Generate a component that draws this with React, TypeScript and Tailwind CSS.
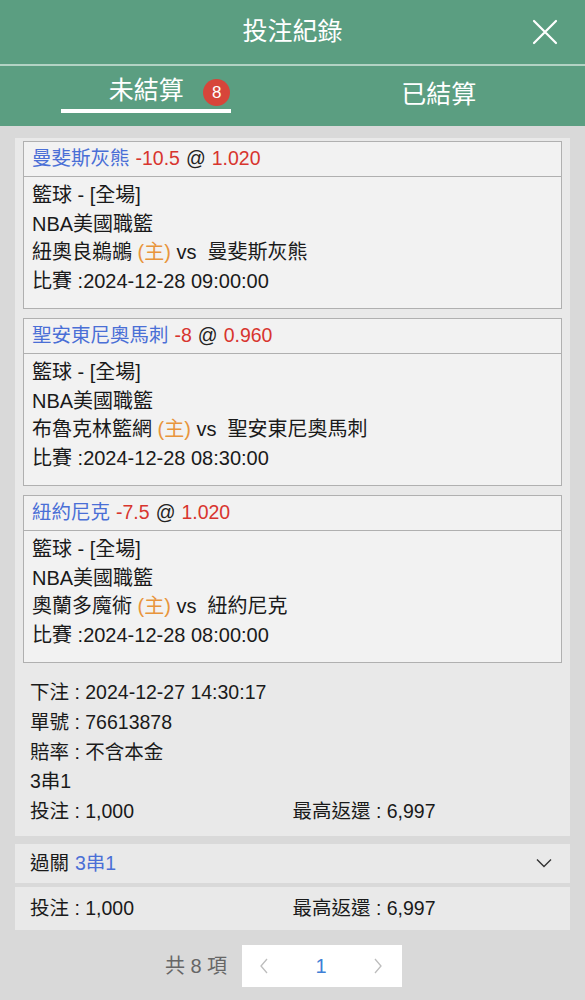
import React from "react";

const font = { fontFamily: '"Liberation Sans", "Noto Sans CJK TC", sans-serif' };

type Bet = { team: string; hdp: string; odds: string; home: string; away: string; time: string };

const bets: Bet[] = [
  { team: "曼斐斯灰熊", hdp: "-10.5", odds: "1.020", home: "紐奧良鵜鶘", away: "曼斐斯灰熊", time: "2024-12-28 09:00:00" },
  { team: "聖安東尼奧馬刺", hdp: "-8", odds: "0.960", home: "布魯克林籃網", away: "聖安東尼奧馬刺", time: "2024-12-28 08:30:00" },
  { team: "紐約尼克", hdp: "-7.5", odds: "1.020", home: "奧蘭多魔術", away: "紐約尼克", time: "2024-12-28 08:00:00" },
];

function Card({ b }: { b: Bet }) {
  return (
    <div className="border border-[#b0b0b0] bg-[#f2f2f2]">
      <div className="h-[35px] flex items-center px-[8px] border-b border-[#b0b0b0] text-[19.5px]">
        <span className="text-[#4a6fd6]">{b.team}</span>
        <span className="text-[#d8352e] ml-[6px]">{b.hdp}</span>
        <span className="text-[#222] ml-[6px]">@</span>
        <span className="text-[#d8352e] ml-[6px]">{b.odds}</span>
      </div>
      <div className="px-[8px] pt-[4px] pb-[13px] text-[20px] leading-[28.5px] text-[#1a1a1a]">
        <div>籃球 - [全場]</div>
        <div>NBA美國職籃</div>
        <div>
          {b.home} <span className="text-[#e8953c]">(主)</span> vs&nbsp; {b.away}
        </div>
        <div>比賽 :{b.time}</div>
      </div>
    </div>
  );
}

export default function App() {
  return (
    <div className="w-[585px] h-[1000px] bg-[#d9d9d9] overflow-hidden" style={font}>
      <div className="h-[64px] bg-[#5b9e81] grid grid-cols-[1fr_auto_1fr] items-center">
        <div />
        <div className="text-white text-[25px]">投注紀錄</div>
        <div className="flex justify-end pr-[27px]">
          <svg width="26" height="26" viewBox="0 0 26 26" fill="none" stroke="white" strokeWidth="2.2" strokeLinecap="round">
            <path d="M2 2 L24 24 M24 2 L2 24" />
          </svg>
        </div>
      </div>
      <div className="h-[2px] bg-[#b3d3c4]" />
      <div className="h-[60px] bg-[#5b9e81] flex">
        <div className="flex-1 flex justify-center">
          <div className="relative w-[170px] h-[47px] pt-[6px] border-b-[4px] border-white flex items-center justify-center">
            <span className="text-white text-[25px]">未結算</span>
            <span className="absolute right-[1px] top-[13px] w-[27px] h-[27px] rounded-full bg-[#d7453a] text-white text-[17px] flex items-center justify-center">8</span>
          </div>
        </div>
        <div className="flex-1 flex justify-center">
          <div className="h-[47px] pt-[10px] flex items-center">
            <span className="text-white text-[25px]">已結算</span>
          </div>
        </div>
      </div>

      <div className="px-[15px] pt-[12px]">
        <div className="bg-[#e9e9e9] px-[8px] pt-[3px]">
          <div className="flex flex-col gap-[9px]">
            {bets.map((b) => (
              <Card key={b.team} b={b} />
            ))}
          </div>
          <div className="px-[7px] pt-[15px] pb-[9px] text-[19.5px] leading-[29.75px] text-[#1a1a1a]">
            <div>下注 : 2024-12-27 14:30:17</div>
            <div>單號 : 76613878</div>
            <div>賠率 : 不含本金</div>
            <div>3串1</div>
            <div className="grid grid-cols-2">
              <div>投注 : 1,000</div>
              <div>最高返還 : 6,997</div>
            </div>
          </div>
        </div>

        <div className="mt-[8px] h-[39px] bg-[#e9e9e9] flex items-center justify-between pl-[15px] pr-[18px] text-[19.5px]">
          <div>
            <span className="text-[#1a1a1a]">過關</span>
            <span className="text-[#4a6fd6] ml-[6px]">3串1</span>
          </div>
          <svg width="16" height="10" viewBox="0 0 16 10" fill="none" stroke="#333" strokeWidth="1.4">
            <path d="M1 1.5 L8 8.5 L15 1.5" />
          </svg>
        </div>
        <div className="mt-[4px] h-[43px] bg-[#e9e9e9] grid grid-cols-2 items-center px-[15px] text-[19.5px] text-[#1a1a1a]">
          <div>投注 : 1,000</div>
          <div>最高返還 : 6,997</div>
        </div>

        <div className="mt-[15px] flex items-center justify-center pr-[18px]">
          <span className="text-[#666] text-[20px] mr-[15px]">共 8 項</span>
          <div className="w-[160px] h-[42px] bg-white flex items-center justify-between pl-[17px] pr-[19px]">
            <svg width="10" height="16" viewBox="0 0 10 16" fill="none" stroke="#bdbdbd" strokeWidth="1.3">
              <path d="M8 1 L2 8 L8 15" />
            </svg>
            <span className="text-[#3f7fd6] text-[20px]">1</span>
            <svg width="10" height="16" viewBox="0 0 10 16" fill="none" stroke="#bdbdbd" strokeWidth="1.3">
              <path d="M2 1 L8 8 L2 15" />
            </svg>
          </div>
        </div>
      </div>
    </div>
  );
}
